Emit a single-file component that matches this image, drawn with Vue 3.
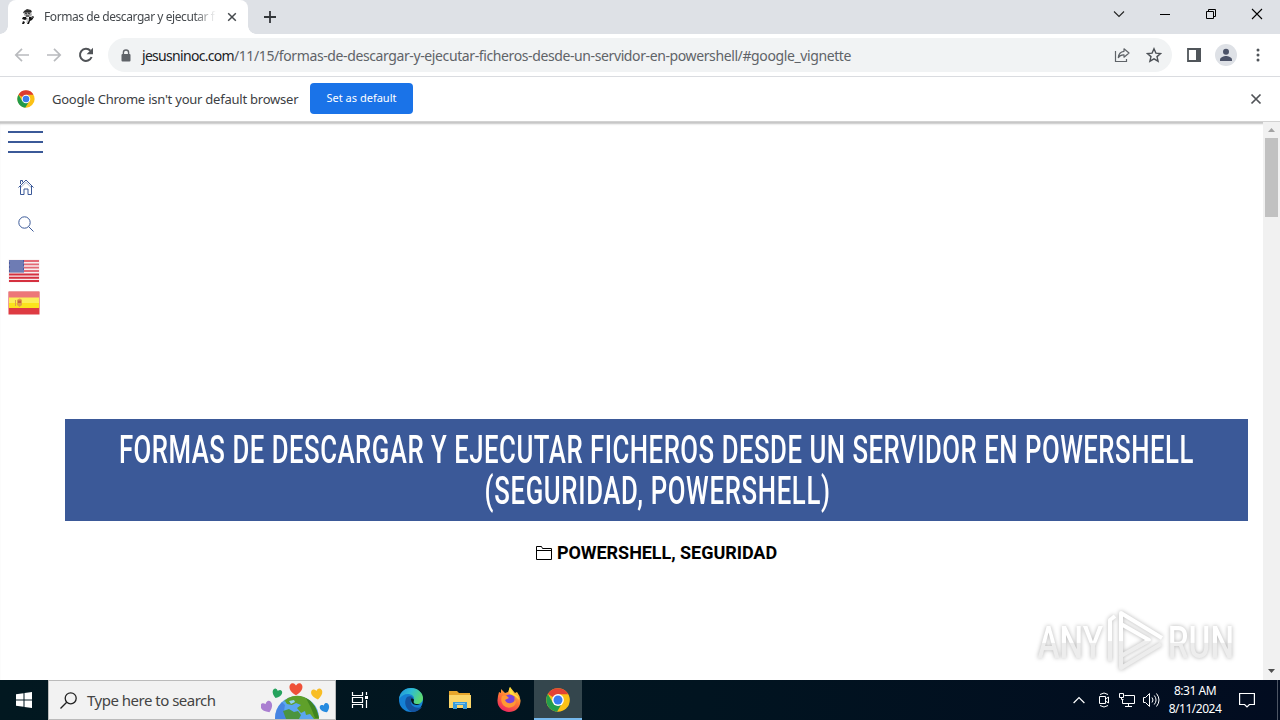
<script setup>
import { ref } from 'vue';

const tabTitle = ref('Formas de descargar y ejecutar f');
const host = 'jesusninoc.com';
const path = '/11/15/formas-de-descargar-y-ejecutar-ficheros-desde-un-servidor-en-powershell/#google_vignette';
const showInfobar = ref(true);
const search = ref('Type here to search');

// x / y of the white stars in the flag canton
const stars = [];
for (let y = 1.5; y < 12; y += 2) {
  for (let x = 1.5; x < 15; x += 2) {
    stars.push({ x: x + ((y - 1.5) % 4 ? 1 : 0), y });
  }
}
</script>

<template>
  <div class="desktop">
    <header class="tab-strip">
      <div class="tab">
        <svg class="favicon" width="16" height="16" viewBox="0 0 16 16">
          <path d="M4 2 7 0l4 1 1 2-2 1-5 .5L3 4z" fill="#333" />
          <path d="M4 3h7l1 3-2 2H6L4 6z" fill="#aaa" />
          <path d="M4 3h7M5 4l2 1m1-1 2 1M6 7h3" stroke="#222" />
          <path d="m3 8 3 0 1 2-2 1-3-1zM9 8l2 0 2-1 1 1-2 3-2 1-1 3H7l2-4zM3 12l2 1-1 2H2z" fill="#111" />
          <path d="m7 9 2 1-2 4zM11 9l2-1" fill="#ddd" stroke="#aaa" stroke-width=".6" />
        </svg>
        <span class="tab-title">{{ tabTitle }}</span>
        <svg class="tab-close" width="10" height="10" viewBox="0 0 10 10"><path d="m1.2 1.2 7.6 7.6m0-7.6L1.2 8.8" stroke="#45494d" stroke-width="1.5" /></svg>
      </div>
      <svg class="new-tab" width="12" height="12" viewBox="0 0 12 12"><path d="M6 0v12M0 6h12" stroke="#33363a" stroke-width="1.8" /></svg>
      <div class="window-buttons">
        <svg width="12" height="12" viewBox="0 0 12 12"><path d="m1 3.5 5 5 5-5" fill="none" stroke="#222" stroke-width="1.1" /></svg>
        <svg width="12" height="12" viewBox="0 0 12 12"><path d="M1 6.5h10" stroke="#000" /></svg>
        <svg width="12" height="12" viewBox="0 0 12 12"><path d="M1.5 3.5h7v7h-7zM3.5 3.5v-2h7v7h-2" fill="none" stroke="#000" /></svg>
        <svg width="12" height="12" viewBox="0 0 12 12"><path d="m1 1 10 10M11 1 1 11" stroke="#000" stroke-width="1.1" /></svg>
      </div>
    </header>

    <nav class="toolbar">
      <svg class="nav-icon" width="16" height="16" viewBox="0 0 16 16"><path d="M15 8H2m6-6.2L1.8 8 8 14.2" fill="none" stroke="#b9bbbe" stroke-width="1.7" /></svg>
      <svg class="nav-icon" width="16" height="16" viewBox="0 0 16 16"><path d="M1 8h13M8 1.8 14.2 8 8 14.2" fill="none" stroke="#b9bbbe" stroke-width="1.7" /></svg>
      <svg class="nav-icon" width="16" height="16" viewBox="0 0 16 16">
        <path d="M13.6 10A6 6 0 1 1 12.4 3.8" fill="none" stroke="#505357" stroke-width="2" />
        <path d="M15 .8v6.4H8.6z" fill="#505357" />
      </svg>
      <div class="omnibox">
        <svg class="lock" width="10" height="13" viewBox="0 0 10 13">
          <path d="M2.4 6V3.6a2.6 2.6 0 0 1 5.2 0V6" fill="none" stroke="#5f6368" stroke-width="1.4" />
          <rect x=".5" y="5" width="9" height="7.6" rx="1" fill="#5f6368" />
        </svg>
        <span class="url"><span class="host">{{ host }}</span><span class="path">{{ path }}</span></span>
        <svg class="share" width="16" height="16" viewBox="0 0 16 16">
          <path d="M1.5 4v10.5h11V12" fill="none" stroke="#5f6368" stroke-width="1.2" />
          <path d="M10 1.8 15 6l-5 4.2V7.8C7.4 7.6 5.6 8.5 4.3 10.6 4.6 7 6.4 4.7 10 4.3z" fill="none" stroke="#5f6368" stroke-width="1.2" stroke-linejoin="round" />
        </svg>
        <svg class="star" width="16" height="16" viewBox="0 0 16 16"><path d="m8 1.8 1.9 4.3 4.7.4-3.6 3.1 1.1 4.6L8 11.8l-4.1 2.4L5 9.6 1.4 6.5l4.7-.4z" fill="none" stroke="#4d5156" stroke-width="1.4" /></svg>
      </div>
      <svg class="side-panel" width="14" height="14" viewBox="0 0 14 14"><path d="M1 1h12v12H1z" fill="#fff" stroke="#50555a" stroke-width="1.8" /><path d="M9 0h5v14H9z" fill="#50555a" /></svg>
      <svg class="avatar" width="22" height="22" viewBox="0 0 22 22">
        <circle cx="11" cy="11" r="11" fill="#dee1e6" />
        <circle cx="11" cy="7.8" r="3" fill="#4c5368" />
        <path d="M5 17v-1.5c0-2.3 4-3.5 6-3.5s6 1.2 6 3.5V17z" fill="#4c5368" />
      </svg>
      <svg class="kebab" width="4" height="14" viewBox="0 0 4 14" fill="#50555a"><circle cx="2" cy="2" r="1.5" /><circle cx="2" cy="7" r="1.5" /><circle cx="2" cy="12" r="1.5" /></svg>
    </nav>

    <div v-if="showInfobar" class="infobar">
      <svg width="18" height="18" viewBox="0 0 24 24">
        <circle cx="12" cy="12" r="11.5" fill="#fbc116" />
        <path d="M12 12 2 6.2A11.5 11.5 0 0 1 22 6.3H12z" fill="#de3b2f" />
        <path d="m12 12-5 2.8L2 6.2a11.5 11.5 0 0 0 9 17.3l5.2-8.5z" fill="#229a4a" />
        <circle cx="12" cy="12" r="5.7" fill="#fff" /><circle cx="12" cy="12" r="4.4" fill="#3b7ded" />
      </svg>
      <span class="infobar-text">Google Chrome isn't your default browser</span>
      <button class="default-button">Set as default</button>
      <svg class="infobar-close" width="12" height="12" viewBox="0 0 12 12" @click="showInfobar = false"><path d="m1.5 1.5 9 9m0-9-9 9" stroke="#505357" stroke-width="1.7" /></svg>
    </div>

    <div class="viewport">
      <aside class="side-menu">
        <div class="burger"><i></i><i></i><i></i></div>
        <svg class="home" width="16" height="16" viewBox="0 0 16 16" fill="none" stroke="#3b5998">
          <path d="M.5 8.5 8 1l7.5 7.5M2.5 7v8.5H6V10h4v5.5h3.5V7M2.5 5V1.5h2v1.8" />
          <path d="m2.5 8.8 5.5-5.5 5.5 5.5" stroke-width=".5" />
        </svg>
        <svg class="find" width="16" height="16" viewBox="0 0 16 16" fill="none" stroke="#3b5998"><circle cx="6.5" cy="6.5" r="5.7" /><path d="m10.700 10.700 4.800 4.800" /></svg>
        <svg class="flag" width="32" height="24" viewBox="0 0 32 24">
          <rect x=".5" y=".5" width="31" height="23" fill="#f7eeee" />
          <path d="M1 2h30M1 5.3h30M1 8.6h30M1 12h30" stroke="#e36a75" stroke-width="1.8" />
          <path d="M1 15.4h30M1 18.7h30M1 22h30" stroke="#d5303f" stroke-width="2" />
          <rect x="1" y="1" width="15" height="12.5" fill="#4a5ba0" />
          <rect v-for="(s, i) in stars" :key="i" :x="s.x" :y="s.y" width="1" height="1" fill="#d9def0" />
        </svg>
        <svg class="flag" width="32" height="24" viewBox="0 0 32 24">
          <rect x=".5" y=".5" width="31" height="23" fill="#de3b42" />
          <rect x="1" y="1" width="30" height="6" fill="#ed7778" />
          <rect x="1" y="6.5" width="30" height="6" fill="#fbee5a" />
          <rect x="1" y="12" width="30" height="5" fill="#fbe31c" />
          <path d="M7 9h1v6H7zM9 9q3-3 5 0v5l-2.5 2L9 14z" fill="#dfa04a" />
          <path d="M10 9.500h3V12h-3z" fill="#c9603f" />
        </svg>
      </aside>

      <main class="article">
        <h1 class="title">
          <span class="line">FORMAS DE DESCARGAR Y EJECUTAR FICHEROS DESDE UN SERVIDOR EN POWERSHELL</span>
          <span class="line second">(SEGURIDAD, POWERSHELL)</span>
        </h1>
        <div class="categories">
          <svg width="16" height="14" viewBox="0 0 16 14"><path d="M.5 13.5V.5h5l1 2h9v11zM.5 4.5h15" fill="none" stroke="#000" /></svg>
          <span>POWERSHELL, SEGURIDAD</span>
        </div>
      </main>

      <div class="scrollbar">
        <svg width="17" height="16" viewBox="0 0 17 16"><path d="m5 10 3.5-4 3.5 4z" fill="#a3a3a3" /></svg>
        <div class="thumb"></div>
        <svg class="down" width="17" height="17" viewBox="0 0 17 17"><path d="m5 6 3.5 4L12 6z" fill="#505050" /></svg>
      </div>

      <div class="watermark">
        <span class="word">ANY</span>
        <svg width="60" height="66" viewBox="0 0 60 66">
          <defs>
            <linearGradient id="fade" x1="0" y1="0" x2="0" y2="1">
              <stop offset=".5" stop-color="#fff" /><stop offset=".52" stop-color="#ededed" />
            </linearGradient>
          </defs>
          <path d="M5 53V12l5-4M16 47V5l41 25M16 16l28 16-28 16v12l40-24M25 43l18-10" fill="none" stroke="url(#fade)" stroke-width="4" stroke-linejoin="round" />
        </svg>
        <span class="word">RUN</span>
      </div>
    </div>

    <footer class="taskbar">
      <div class="start">
        <svg width="16" height="16" viewBox="0 0 16 16" fill="#fff"><path d="m0 2.3 7.5-1.100v6.300H0zM8.500 1.100 16 0v7.500H8.500zM0 8.500h7.500v6.300L0 13.700zM8.500 8.500H16V16l-7.500-1.100z" /></svg>
      </div>
      <div class="search-box">
        <svg class="magnifier" width="17" height="17" viewBox="0 0 17 17" fill="none" stroke="#222" stroke-width="1.3"><circle cx="10.7" cy="6.3" r="5.5" /><path d="m6.7 10.3-6.2 6.2" /></svg>
        <span>{{ search }}</span>
        <svg class="earth" width="70" height="38" viewBox="0 0 70 38">
          <defs>
            <path id="heart" d="M0 5.5C-8 1-6-5-3-5-1-5 0-3 0-3S1-5 3-5C6-5 8 1 0 5.5z" />
          </defs>
          <circle cx="36" cy="37" r="22" fill="#5ba6f0" />
          <path d="M14 38q0-10 7-17l3 3-1 6 4 8z" fill="#3f78dc" opacity=".7" />
          <path d="m22 21 5-4q8-4 16-1 12 5 15 22h-5l-4-5-4 1-1-4-4 2-4-5 4-3-5-2-4 2-5-1-2-3z" fill="#5fa02a" />
          <path d="m45 17q10 5 13 20h-4l-4-10z" fill="#3f8420" />
          <path d="m22 30 6-2 5 3 4-1 3 4-2 4H25z" fill="#4b9440" />
          <path d="m28 20 5-1 1 2-4 2z" fill="#8fd0f2" />
          <use href="#heart" transform="translate(6 26) rotate(-25) scale(1.05)" fill="#aa7fd1" />
          <use href="#heart" transform="translate(16 12.5) rotate(18) scale(.85)" fill="#26a35d" />
          <use href="#heart" transform="translate(35 8) scale(1.15)" fill="#ef5139" />
          <use href="#heart" transform="translate(56 13) rotate(-10)" fill="#f8bd24" />
          <use href="#heart" transform="translate(64 27) rotate(-25) scale(.85)" fill="#268be0" />
        </svg>
      </div>
      <div class="app">
        <svg width="18" height="16" viewBox="0 0 18 16" fill="none" stroke="#fff" stroke-width="1.2"><path d="M1.5 0v3.5h10V0M1.5 16v-3.5h10V16M1.5 5.5h10v5h-10zM15.5 0v3M15.5 8v8" /><path d="M14 4h3v3h-3z" fill="#fff" stroke="none" /></svg>
      </div>
      <div class="app edge">
        <svg width="26" height="26" viewBox="0 0 26 26">
          <defs>
            <linearGradient id="edge-top" x1="0" y1="0" x2="1" y2=".4"><stop offset="0" stop-color="#1f8edb" /><stop offset=".5" stop-color="#2dbbd5" /><stop offset="1" stop-color="#5bd873" /></linearGradient>
          </defs>
          <circle cx="13" cy="13" r="12" fill="#1580d4" />
          <path d="M1 12C2 4 8 1 13 1c7 0 12 5 12 10 0 4-3 6-6 6-4 0-4-2-3-4 1-4-3-6-6-6-4 0-7 2-9 5z" fill="url(#edge-top)" />
          <path d="M9 10c-4 5-1 13 5 15 4 0 8-2 10-5-6 2-12-1-11-6 0-2 2-3 2-3-1-2-4-2-6-1z" fill="#1453a0" />
          <path d="M13 12c1-1 3 0 3 1-1 3 0 4 3 4h3c-4 2-9 1-9-5z" fill="#06151c" />
        </svg>
      </div>
      <div class="app">
        <svg width="22" height="20" viewBox="0 0 22 20">
          <path d="M0 1h8l2 2h11v5H0z" fill="#e7a62b" /><path d="M0 5h22v13H0z" fill="#fbd568" />
          <path d="M4 19v-7h14v7h-4v-4H8v4z" fill="#379bdb" /><path d="M6 13h10v1H6z" fill="#85c8ed" />
        </svg>
      </div>
      <div class="app">
        <svg width="26" height="26" viewBox="0 0 26 26">
          <defs>
            <linearGradient id="fox" x1=".8" y1="0" x2=".3" y2="1"><stop offset="0" stop-color="#ffe13b" /><stop offset=".5" stop-color="#ff7935" /><stop offset="1" stop-color="#ed2361" /></linearGradient>
          </defs>
          <path d="m5 6 0-4 4 4 3-1 2-5 5 6 2-1q4 5 3.5 9.5C24 21 19 25 13 25S1 20.5 1.5 13Q2 8 3 5z" fill="url(#fox)" />
          <circle cx="13.5" cy="13.5" r="6" fill="#7943da" />
          <path d="M6 9q4-2 7 2l-4 2q2 4 6 3 5-1 3-6 4 5 0 9-6 4-11-1-3-4-1-9z" fill="#ff9833" />
          <path d="m14 0 4 7q5 2 5 6-4-5-9-6-2-4 0-7z" fill="#ffde3c" />
        </svg>
      </div>
      <div class="app active">
        <svg width="24" height="24" viewBox="0 0 24 24">
          <circle cx="12" cy="12" r="11.8" fill="#fbc116" />
          <path d="M12 12 1.8 6.1A11.8 11.8 0 0 1 22.3 6.3H12z" fill="#e24335" />
          <path d="m12 12-5 2.8L1.8 6.1A11.8 11.8 0 0 0 11 23.7l5.2-8.7z" fill="#249d4c" />
          <circle cx="12" cy="12" r="5.9" fill="#fff" /><circle cx="12" cy="12" r="4.5" fill="#377cf0" />
        </svg>
      </div>
      <div class="tray">
        <svg width="12" height="8" viewBox="0 0 12 8"><path d="m.6 7 5.400-5.500L11.400 7" fill="none" stroke="#fff" stroke-width="1.2" /></svg>
        <svg class="meet" width="12" height="16" viewBox="0 0 12 16" fill="none" stroke="#fff"><path d="M1.500 4.500h6v7h-6zM7.500 7l3-2v6l-3-2M2 2.500q4-3 8 0M2 13.500q4 3 8 0" /></svg>
        <svg class="network" width="17" height="15" viewBox="0 0 17 15" fill="none" stroke="#fff"><path d="M5.500 2.500h10v8h-12v-4M9.500 10.500v3M6 13.500h7M.500.500h4v4h-4zM2.500 4.500v2h2" /></svg>
        <svg class="volume" width="17" height="14" viewBox="0 0 17 14" fill="none" stroke="#fff"><path d="M.500 4.500h2l4-4v13l-4-4h-2zM9 4.500q2 2.500 0 5M11.300 2.500q3.500 4.500 0 9M13.500.500q5 6.500 0 13" /></svg>
        <div class="clock"><span>8:31 AM</span><span>8/11/2024</span></div>
        <svg class="notice" width="16" height="16" viewBox="0 0 16 16" fill="none" stroke="#fff" stroke-width="1.2"><path d="M.6 1.500h14.800v11h-5L8 15l-2.400-2.500h-5z" /></svg>
      </div>
    </footer>
  </div>
</template>

<style>
body {
  margin: 0;
  overflow: hidden;
}
</style>

<style scoped>
.desktop {
  width: 1280px;
  height: 720px;
  display: flex;
  flex-direction: column;
  background: #fff;
  font-family: "Noto Sans", sans-serif;
}

svg {
  display: block;
  flex: none;
}

.tab-strip {
  height: 34px;
  display: flex;
  background: #dee1e6;
}

.tab {
  width: 240px;
  height: 34px;
  margin-left: 8px;
  padding-left: 12px;
  box-sizing: border-box;
  display: flex;
  align-items: center;
  background: #fff;
  border-radius: 8px 8px 0 0;
  position: relative;
}

/* rounded feet of the active tab */
.tab::before,
.tab::after {
  content: "";
  position: absolute;
  bottom: 0;
  width: 8px;
  height: 8px;
}

.tab::before {
  left: -8px;
  background: radial-gradient(circle at 0 0, transparent 7.5px, #fff 8px);
}

.tab::after {
  right: -8px;
  background: radial-gradient(circle at 100% 0, transparent 7.5px, #fff 8px);
}

.tab-title {
  width: 172px;
  margin: -1px 0 0 8px;
  overflow: hidden;
  white-space: nowrap;
  font-size: 12px;
  letter-spacing: -0.43px;
  color: #45494d;
  mask-image: linear-gradient(90deg, #000 150px, transparent 172px);
}

.tab-close {
  margin-left: 11px;
}

.new-tab {
  margin: 11px 0 0 16px;
}

.window-buttons {
  margin: 8px 17px 0 auto;
  display: flex;
  gap: 34px;
}

.toolbar {
  height: 42px;
  padding: 0 20px 0 14px;
  display: flex;
  align-items: center;
  border-bottom: 1px solid #dadce0;
}

.nav-icon {
  margin-right: 16px;
}

.omnibox {
  width: 1064px;
  height: 34px;
  margin-left: -2px;
  padding: 0 10px 0 13px;
  box-sizing: border-box;
  display: flex;
  align-items: center;
  border-radius: 17px;
  background: #f1f3f4;
}

.url {
  margin-left: 11px;
  white-space: nowrap;
  font-size: 14px;
}

.host {
  color: #202124;
  letter-spacing: -0.7px;
}

.path {
  color: #5f6368;
  letter-spacing: -0.39px;
}

.share {
  margin-left: auto;
}

.star {
  margin-left: 16px;
}

.side-panel {
  margin-left: 15px;
}

.avatar {
  margin-left: 14px;
}

.kebab {
  margin-left: auto;
}

.infobar {
  height: 45px;
  padding: 0 18px 2px 17px;
  box-sizing: border-box;
  display: flex;
  align-items: center;
}

.infobar-text {
  width: 246px;
  margin-left: 17px;
  white-space: nowrap;
  font-size: 13px;
  letter-spacing: -0.23px;
  color: #3c4043;
}

.default-button {
  width: 103px;
  height: 31px;
  margin-left: 12px;
  padding: 0 0 2px;
  border: 0;
  border-radius: 4px;
  background: #1a73e8;
  color: #fff;
  font: 11px "Noto Sans", sans-serif;
  letter-spacing: 0;
}

.infobar-close {
  margin-left: auto;
}

.viewport {
  height: 558px;
  display: flex;
  position: relative;
  box-shadow: inset 0 3px 2px -1px #c4c4c4, 0 -1px #d2d2d2;
}

.side-menu {
  width: 65px;
  padding: 9px 0 0 8px;
  box-sizing: border-box;
}

.burger {
  width: 35px;
  display: flex;
  flex-direction: column;
  gap: 8px;
}

.burger i {
  height: 2px;
  background: #3b5998;
}

.home {
  margin: 26px 0 0 10px;
}

.find {
  margin: 21px 0 27px 10px;
}

.flag {
  margin-bottom: 8px;
}

.article {
  width: 1183px;
  padding-top: 297px;
}

.title {
  height: 102px;
  margin: 0;
  padding-top: 11px;
  box-sizing: border-box;
  display: flex;
  flex-direction: column;
  align-items: center;
  background: #3b5998;
  color: #fff;
  font: 500 39px/41px Roboto, sans-serif;
  letter-spacing: 0.78px;
  white-space: nowrap;
}

/* condensed caps */
.line {
  transform: scaleX(0.66);
}

.second {
  padding-left: 3px;
  letter-spacing: 1px;
}

.categories {
  margin-top: 21px;
  display: flex;
  align-items: center;
  justify-content: center;
  gap: 5px;
  color: #000;
  font: bold 18px/21px Roboto, sans-serif;
  letter-spacing: -0.05px;
}

.scrollbar {
  width: 17px;
  margin-left: auto;
  display: flex;
  flex-direction: column;
  align-items: center;
  background: #f1f1f1;
}

.thumb {
  width: 13px;
  height: 79px;
  background: #c1c1c1;
}

.down {
  margin-top: auto;
}

.watermark {
  width: 210px;
  height: 74px;
  position: absolute;
  left: 1031px;
  top: 482px;
  display: flex;
  align-items: center;
  justify-content: center;
  filter: drop-shadow(0 0 2px #b4b4b4);
}

.word {
  padding-top: 3px;
  margin: 0 -9px;
  background: linear-gradient(#fff 53%, #ededed 54%);
  background-clip: text;
  color: transparent;
  font: 500 45px/45px Roboto, sans-serif;
  transform: scaleX(0.74);
}

.taskbar {
  height: 40px;
  display: flex;
  background: linear-gradient(90deg, #021820, #011420 55%, #020c20);
  color: #fff;
}

.start {
  width: 48px;
  display: flex;
  align-items: center;
  justify-content: center;
}

.search-box {
  width: 288px;
  height: 40px;
  padding: 0 4px 0 11px;
  box-sizing: border-box;
  display: flex;
  align-items: center;
  border: 1px solid #bbb;
  background: #f2f2f2;
  color: #444;
  font-size: 15px;
  letter-spacing: -0.5px;
  white-space: nowrap;
}

.magnifier {
  margin-right: 10px;
}

.earth {
  margin-left: auto;
}

.app {
  width: 48px;
  height: 40px;
  margin-right: 1px;
  display: flex;
  align-items: center;
  justify-content: center;
  box-sizing: border-box;
}

.app.edge {
  margin-left: 2px;
}

.app.active {
  border-bottom: 2px solid #76b9ed;
  padding-top: 2px;
  background: #34464d;
}

.tray {
  width: 205px;
  margin-left: auto;
  display: flex;
  align-items: center;
  border-right: 1px solid #4d5564;
  margin-right: 2px;
  box-sizing: border-box;
}

.meet {
  margin-left: 13px;
}

.network {
  margin-left: 9px;
}

.volume {
  margin-left: 7px;
}

.clock {
  width: 60px;
  margin-left: 5px;
  display: flex;
  flex-direction: column;
  align-items: center;
  font-size: 12px;
  line-height: 18px;
  letter-spacing: -0.48px;
}

.notice {
  margin-left: 14px;
}
</style>
